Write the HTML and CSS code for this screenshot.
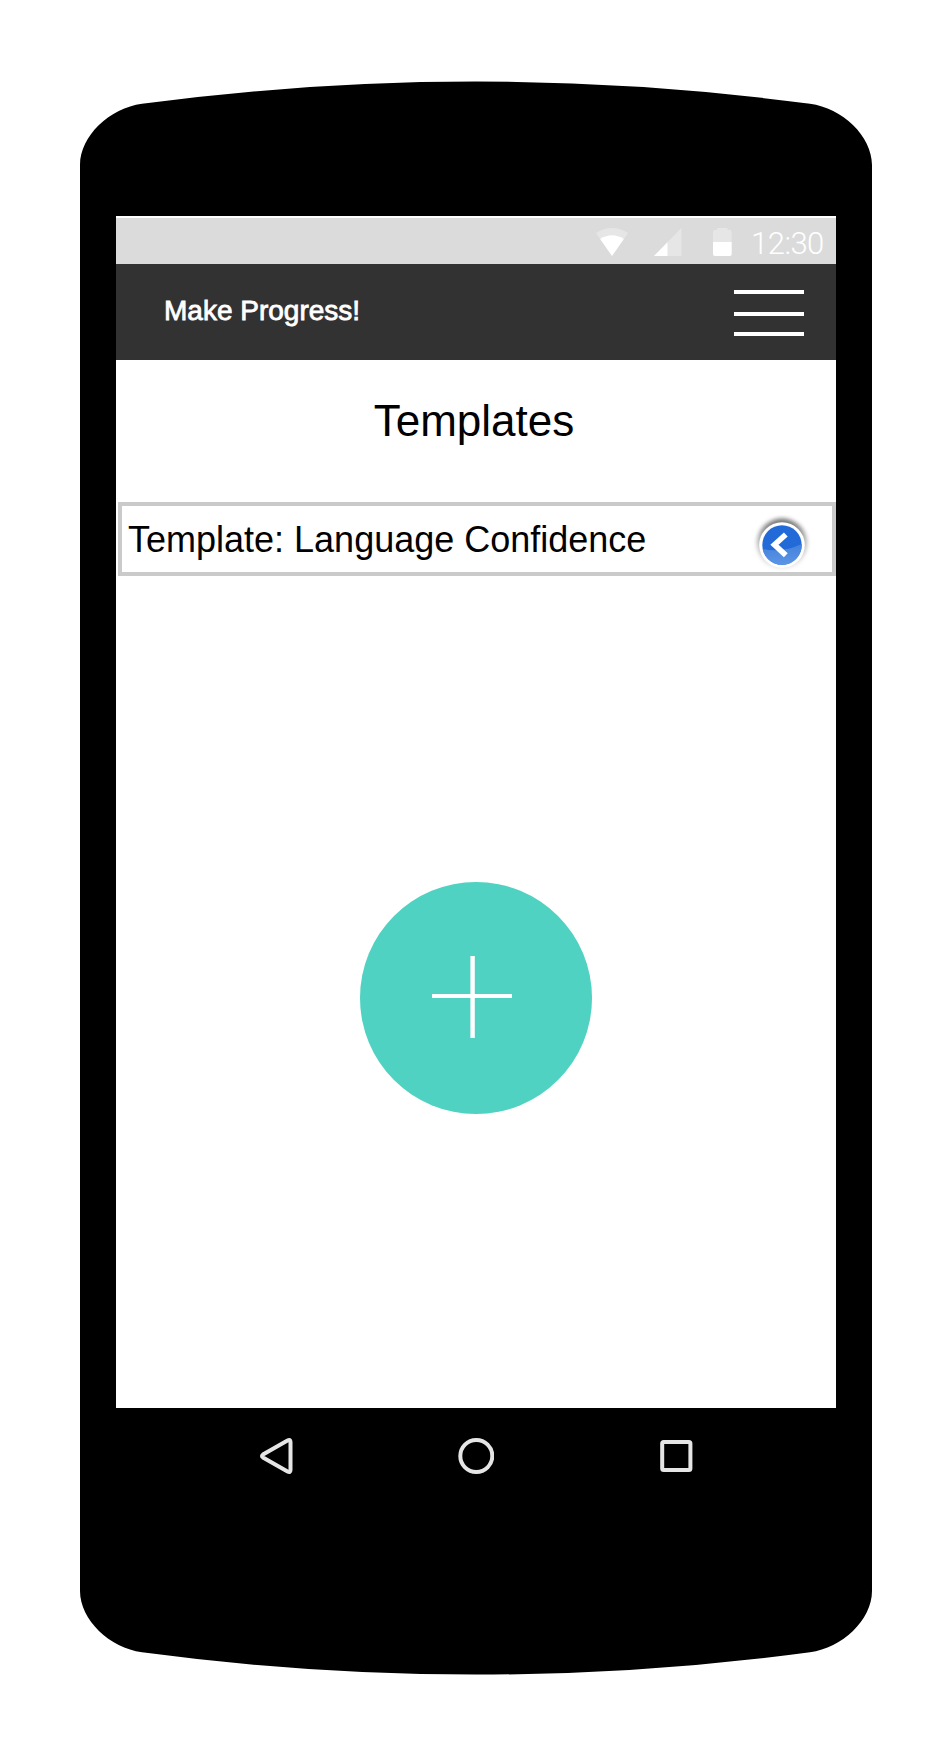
FILE: index.html
```html
<!DOCTYPE html>
<html lang="en">
<head>
<meta charset="utf-8">
<title>Make Progress!</title>
<link rel="stylesheet" href="styles.css">
</head>
<body>
<div class="phone">
  <main class="screen">
    <div class="status-bar">
      <svg class="wifi" width="32" height="28" viewBox="0 0 32 28"><path class="dim" d="M0 5Q16-5 32 5L16 28z"/><path class="lit" d="M4.2 11Q16 3.5 27.8 11L16 28z"/></svg>
      <svg class="signal" width="28" height="28" viewBox="0 0 28 28"><path class="dim" d="M0 28L27.5 0V28z"/><path class="lit" d="M0 28L13.5 14.3V28z"/></svg>
      <svg class="battery" width="19" height="28" viewBox="0 0 19 28"><path class="dim" d="M4 2V0H14.5V2H17Q18.7 2 18.7 4V14H0V4Q0 2 2 2z"/><path class="lit" d="M0 14H18.7V26Q18.7 28 17 28H2Q0 28 0 26z"/></svg>
      <span class="clock">12:30</span>
    </div>
    <header class="app-bar">
      <span class="brand">Make Progress!</span>
      <svg width="70" height="46" viewBox="0 0 70 46" fill="#fff"><path d="M0 0H70V4H0zM0 22H70V26H0zM0 42H70V46H0z"/></svg>
    </header>
    <h1 class="title">Templates</h1>
    <div class="template-row">
      <span>Template: Language Confidence</span>
      <svg class="badge" width="60" height="60" viewBox="0 0 60 60">
        <defs>
          <linearGradient id="shade" x2="0" y2="1"><stop offset="0" stop-color="#000" stop-opacity=".58"/><stop offset=".5" stop-color="#000" stop-opacity=".28"/><stop offset="1" stop-color="#000" stop-opacity=".08"/></linearGradient>
          <filter id="soft" x="-20%" y="-20%" width="140%" height="140%"><feGaussianBlur stdDeviation="2"/></filter>
          <linearGradient id="gloss" x2="0" y2="1"><stop offset="0" stop-color="#4381dc"/><stop offset="1" stop-color="#5b95e5"/></linearGradient>
        </defs>
        <circle cx="30" cy="28.5" r="25" fill="url(#shade)" filter="url(#soft)"/>
        <circle cx="30" cy="30" r="22.8" fill="#fff"/>
        <circle cx="30" cy="30" r="19.7" fill="#226ad8"/>
        <path d="M10.7 34Q31 38 49.7 29A19.7 19.7 0 0 1 10.7 34z" fill="url(#gloss)"/>
        <path d="M33.8 19.5L22.5 29.7L33.8 40.3" fill="none" stroke="#fff" stroke-width="5.6"/>
      </svg>
    </div>
    <div class="add-area">
      <svg width="232" height="232" viewBox="0 0 232 232"><circle cx="116" cy="116" r="116" fill="#50d2c2"/><path d="M72 112H152V116H72zM110.4 74H114.8V156H110.4z" fill="#fff"/></svg>
    </div>
  </main>
  <nav class="nav-bar">
    <svg width="36" height="36" viewBox="0 0 36 36"><path d="M29.5 2.5Q32.5 1 32.5 4V32Q32.5 35 29.5 33.5L5 19.5Q3 18 5 16.5z"/></svg>
    <svg width="36" height="36" viewBox="0 0 36 36"><circle cx="18.3" cy="18" r="16"/></svg>
    <svg width="36" height="36" viewBox="0 0 36 36"><rect x="4.2" y="4" width="28.2" height="28" rx="1.5"/></svg>
  </nav>
</div>
</body>
</html>
```
FILE: styles.css
```css
* { box-sizing: border-box; }

body {
  margin: 0;
  background: #fff;
  font-family: "Liberation Sans", Arial, sans-serif;
}

svg { display: block; flex: none; }

.phone {
  width: 792px;
  height: 1594px;
  margin: 81px 80px;
  padding: 135px 36px 0;
  background: #000;
  clip-path: path("M0 84C0 55 30 27 62 22.8Q396 -21.6 730 22.8C762 27 792 55 792 84V1510C792 1539 762 1567 730 1571.2Q396 1616 62 1571.2C30 1567 0 1539 0 1510Z");
}

.screen {
  height: 1192px;
  padding-top: 2px;
  background: #fff;
}

.status-bar {
  display: flex;
  height: 46px;
  padding: 10px 12px 0 480px;
  background: #dbdbdb;
}

.dim { fill: #e6e6e6; }
.lit { fill: #fff; }
.signal { margin-left: 26px; }
.battery { margin-left: 31px; }

.clock {
  margin-left: 19px;
  color: #fff;
  font: 300 31px/32px Roboto, sans-serif;
  letter-spacing: -0.5px;
}

.app-bar {
  display: flex;
  justify-content: space-between;
  height: 96px;
  padding: 26px 32px 0 48px;
  background: #323232;
}

.brand {
  color: #fff;
  font-size: 28px;
  line-height: 41px;
  -webkit-text-stroke: 0.8px #fff;
}

.title {
  margin: 36px 4px 0 0;
  font-size: 44px;
  font-weight: 400;
  line-height: 50px;
  text-align: center;
}

.template-row {
  display: flex;
  justify-content: space-between;
  height: 74px;
  margin: 56px 0 0 2px;
  padding: 0 20px 0 6px;
  border: 4px solid #cacaca;
  font-size: 36px;
  line-height: 67px;
}

.badge { margin-top: 9px; }

.add-area {
  display: flex;
  justify-content: center;
  padding-top: 306px;
}

.nav-bar {
  display: flex;
  justify-content: space-between;
  padding: 30px 142px 0;
  fill: none;
  stroke: #e5e5e5;
  stroke-width: 4;
}
```
